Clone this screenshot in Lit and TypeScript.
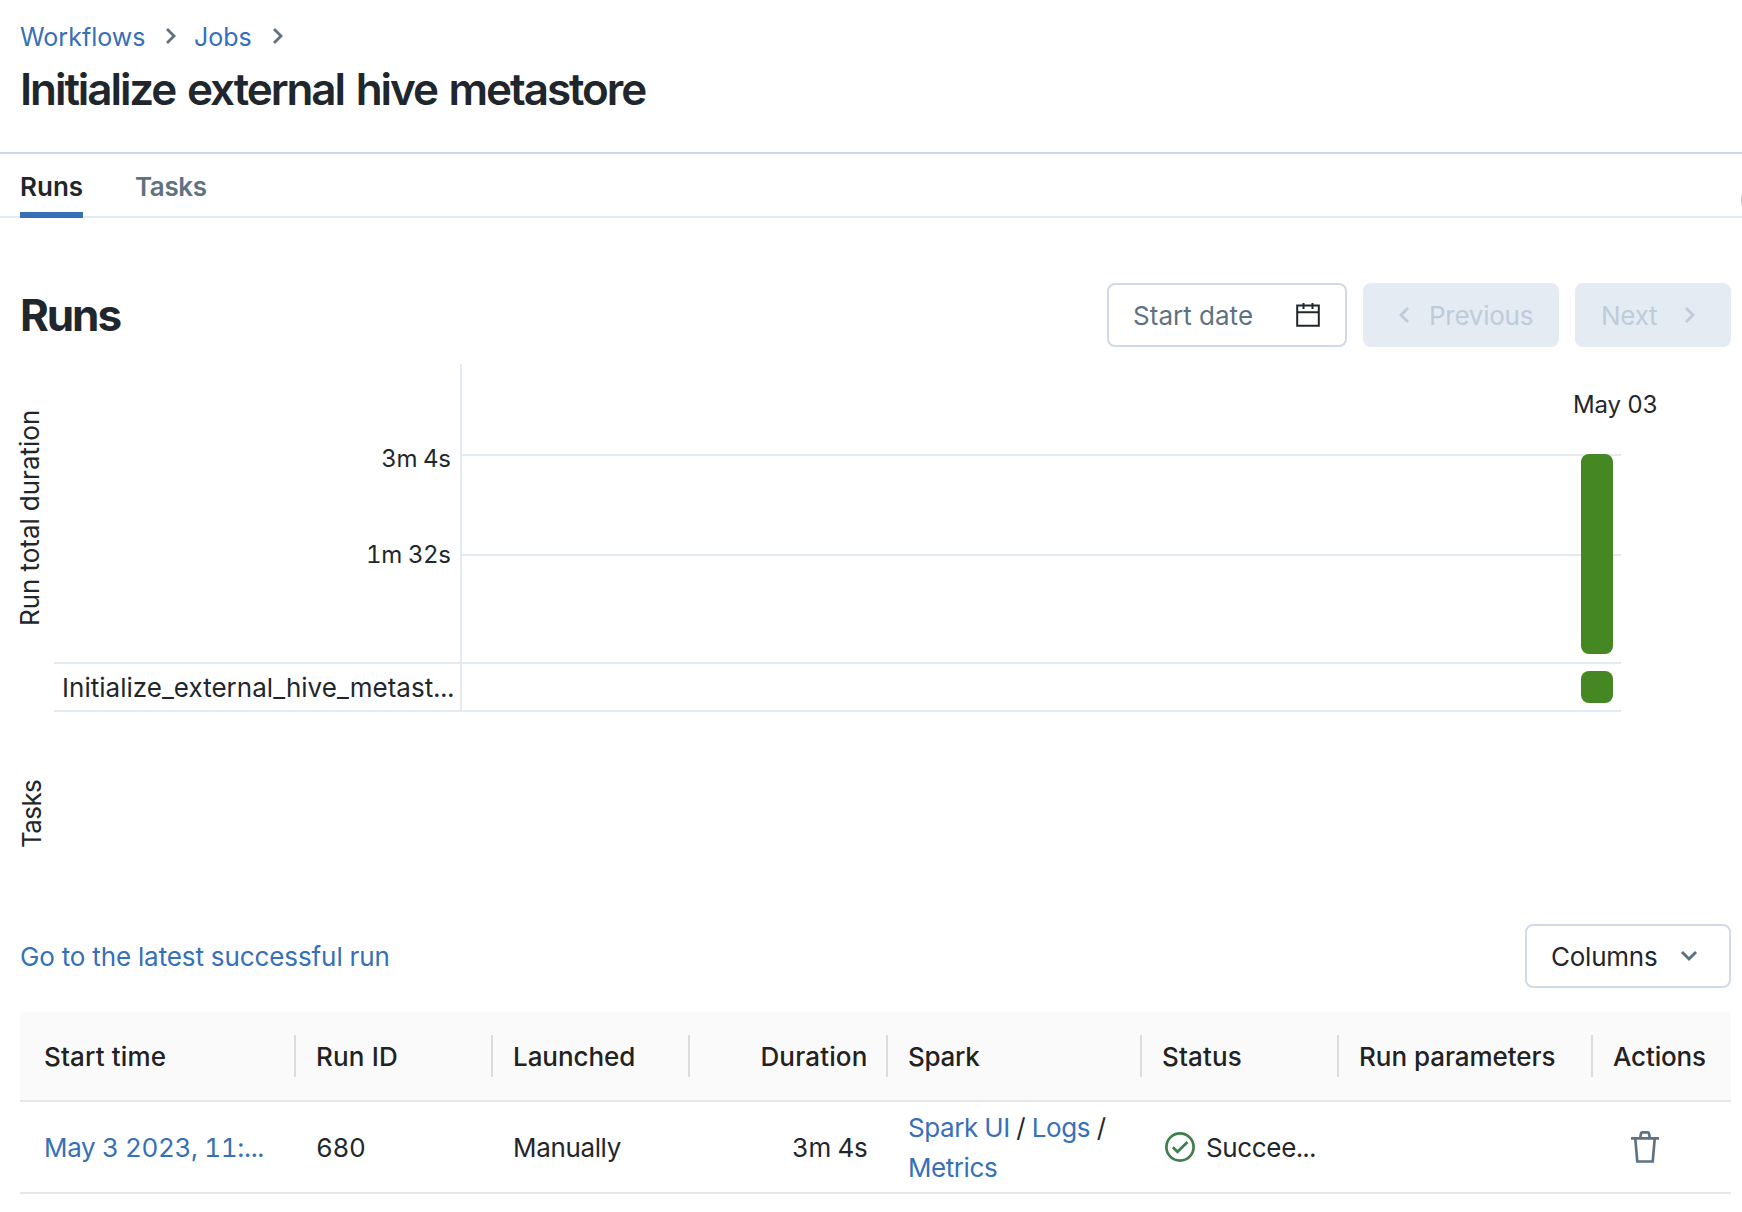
import { LitElement, html, css } from "lit";
import { customElement } from "lit/decorators.js";

const chevronRight = html`<svg class="chev" width="12" height="18" viewBox="0 0 12 18" aria-hidden="true"><path d="M2 2l7 7-7 7" fill="none" stroke="currentColor" stroke-width="2.8"/></svg>`;
const chevronLeft = html`<svg class="chev" width="12" height="18" viewBox="0 0 12 18" aria-hidden="true"><path d="M10 2L3 9l7 7" fill="none" stroke="currentColor" stroke-width="2.8"/></svg>`;
const chevronDown = html`<svg width="18" height="12" viewBox="0 0 18 12" aria-hidden="true"><path d="M2 2l7 7 7-7" fill="none" stroke="currentColor" stroke-width="3"/></svg>`;
const calendar = html`<svg width="24" height="26" viewBox="0 0 24 26" aria-hidden="true"><path d="M1.2 3.4h21.6v20.4H1.2zM1.2 10.2h21.6M7.5 1v6M16.5 1v6" fill="none" stroke="#1f272d" stroke-width="2"/></svg>`;
const checkCircle = html`<svg width="30" height="30" viewBox="0 0 30 30" aria-hidden="true"><circle cx="15" cy="15" r="13.6" fill="none" stroke="#3f7f4c" stroke-width="2.7"/><path d="M7.8 15.2l4.7 4.6 10-9.8" fill="none" stroke="#3f7f4c" stroke-width="2.7"/></svg>`;
const trash = html`<svg width="28" height="32" viewBox="0 0 28 32" aria-hidden="true"><path d="M0 7.3h28M9.2 7l.8-4.6q.2-1 1.2-1h5.600q1 0 1.200 1L18.800 7M4.300 8l2 22.500h15.400l2-22.500" fill="none" stroke="#5f7281" stroke-width="2.700"/></svg>`;

@customElement("app-root")
export class AppRoot extends LitElement {
  static styles = css`
    :host {
      display: block;
      position: relative;
      width: 1742px;
      height: 1212px;
      overflow: hidden;
      background: #fff;
      color: #1f272d;
      font: 400 26px/40px Inter, "Liberation Sans", sans-serif;
      font-variant-numeric: tabular-nums;
      white-space: nowrap;
    }
    * { box-sizing: border-box; }
    svg { display: block; flex: none; }
    a { color: #3670b8; text-decoration: none; }
    .header { height: 154px; padding: 17px 20px 0; border-bottom: 2px solid #d1d9e0; }
    .crumbs { display: flex; align-items: center; height: 40px; font-size: 25px; color: #5f7281; }
    .crumbs .chev { margin: 0 16.5px 2px 20px; }
    h1, h2 { margin: 0; font-size: 44px; font-weight: 600; line-height: 56px; }
    h1 { margin: 4px 0 0; letter-spacing: -2.08px; word-spacing: 2px; }
    h2 { font-weight: 700; letter-spacing: -2.1px; }
    .tabs { display: flex; gap: 52px; height: 64px; padding: 0 20px; border-bottom: 2px solid #e4ebf0; font-weight: 600; color: #5f7281; }
    .tab { height: 64px; padding-top: 13px; letter-spacing: -0.4px; }
    .tab.on { width: 63px; color: #1f272d; border-bottom: 6px solid #3670b8; letter-spacing: 0; }
    .clipped { position: absolute; left: 1740.5px; top: 176px; width: 48px; height: 48px; border: 2px solid #c4c8cc; border-radius: 50%; }
    .bar { display: flex; align-items: center; height: 64px; margin: 65px 11px 0 20px; }
    .grow { flex: 1; }
    .btn { display: flex; align-items: center; height: 64px; border-radius: 8px; border: 2px solid #cfdbe6; }
    .btn span { padding-top: 2px; }
    .date { width: 240px; padding: 0 25px 0 24px; justify-content: space-between; color: #5f7281; margin-right: 16px; letter-spacing: 0.06px; }
    .off { background: #e4ebf2; border: 0; color: #becbdb; letter-spacing: -0.25px; }
    .prev { width: 196px; padding-left: 35px; gap: 19px; margin-right: 16px; }
    .next { width: 156px; padding-left: 26px; gap: 27px; }
    .chart { display: flex; height: 560px; margin: 17px 0 0 20px; }
    .axes { width: 34px; }
    .axis { writing-mode: vertical-rl; transform: rotate(180deg); width: 20px; line-height: 20px; text-align: center; }
    .axis.total { height: 307px; }
    .axis.tasks { height: 285px; letter-spacing: -0.6px; margin-left: 2px; }
    .labels { width: 408px; height: 348px; border-right: 2px solid #e4ebf0; font-size: 24px; text-align: right; }
    .ticks { height: 298px; padding: 75px 9.5px 0 0; letter-spacing: -0.4px; }
    .tick { height: 96px; }
    .task { height: 50px; border: solid #e4ebf0; border-width: 2px 0; padding-left: 8px; font-size: 26px; line-height: 47px; text-align: left; letter-spacing: 0.02px; }
    .plot { position: relative; width: 1159px; height: 348px; display: grid; grid-template-columns: 1159px; grid-template-rows: 90px 100px 108px 50px; }
    .line { border-top: 2px solid #e4ebf0; }
    .line.last { border-bottom: 2px solid #e4ebf0; }
    .day { padding: 21px 0 0 1111px; font-size: 24px; letter-spacing: -0.15px; }
    .mark { position: absolute; left: 1119px; width: 32px; border-radius: 8px; background: #458722; }
    .mark.run { top: 90px; height: 200px; }
    .mark.step { top: 307px; height: 32px; }
    .tools { display: flex; align-items: center; height: 64px; margin: 0 11px 0 20px; letter-spacing: -0.09px; }
    .tools > a { padding-top: 2px; }
    .cols { width: 206px; padding-left: 24px; gap: 23px; color: #1f272d; letter-spacing: -0.25px; }
    .cols svg { color: #5f7281; }
    .table { margin: 24px 11px 0 20px; }
    .row { display: grid; grid-template-columns: 276px 197px 197px 198px 254px 197px 254px 138px; align-items: center; height: 92px; border-bottom: 2px solid #e6e7e8; }
    .row.head { height: 90px; background: #fafafa; color: #222; font-weight: 500; }
    .cell { padding-left: 20px; height: 42px; line-height: 44px; border-right: 2px solid transparent; letter-spacing: -0.35px; }
    .cell:first-child { padding-left: 24px; }
    .head .cell { border-color: #dcdcdc; letter-spacing: 0.15px; }
    .head .cell:last-child { border-color: transparent; letter-spacing: -0.15px; }
    .cell.num { text-align: right; padding-right: 18.5px; }
    .head .even { letter-spacing: -0.05px; }
    .head .tight { letter-spacing: -0.3px; }
    .cell.date-cell { letter-spacing: -0.35px; }
    .cell.spark { height: 80px; padding-top: 1px; line-height: 40px; white-space: normal; letter-spacing: -0.43px; }
    .cell.status { display: flex; align-items: center; gap: 11px; padding-left: 23px; }
    .cell.status span { padding-top: 1px; }
    .cell.act { display: flex; align-items: center; padding-left: 38px; }
  `;

  private columns = [
    { name: "Start time", cls: "" },
    { name: "Run ID", cls: "" },
    { name: "Launched", cls: "even" },
    { name: "Duration", cls: "num" },
    { name: "Spark", cls: "tight" },
    { name: "Status", cls: "" },
    { name: "Run parameters", cls: "even" },
    { name: "Actions", cls: "" },
  ];

  render() {
    return html`
      <header class="header">
        <nav class="crumbs"><a>Workflows</a>${chevronRight}<a>Jobs</a>${chevronRight}</nav>
        <h1>Initialize external hive metastore</h1>
      </header>
      <div class="tabs"><div class="tab on">Runs</div><div class="tab">Tasks</div></div>
      <div class="clipped"></div>

      <div class="bar">
        <h2>Runs</h2>
        <div class="grow"></div>
        <div class="btn date"><span>Start date</span>${calendar}</div>
        <div class="btn off prev">${chevronLeft}<span>Previous</span></div>
        <div class="btn off next"><span>Next</span>${chevronRight}</div>
      </div>

      <section class="chart">
        <div class="axes">
          <div class="axis total">Run total duration</div>
          <div class="axis tasks">Tasks</div>
        </div>
        <div class="labels">
          <div class="ticks"><div class="tick">3m 4s</div><div class="tick">1m 32s</div></div>
          <div class="task">Initialize_external_hive_metast...</div>
        </div>
        <div class="plot">
          <div class="day">May 03</div>
          <div class="line"></div>
          <div class="line"></div>
          <div class="line last"></div>
          <div class="mark run"></div>
          <div class="mark step"></div>
        </div>
      </section>

      <div class="tools">
        <a>Go to the latest successful run</a>
        <div class="grow"></div>
        <div class="btn cols"><span>Columns</span>${chevronDown}</div>
      </div>

      <section class="table">
        <div class="row head">${this.columns.map((c) => html`<div class="cell ${c.cls}">${c.name}</div>`)}</div>
        <div class="row">
          <div class="cell date-cell"><a>May 3 2023, 11:...</a></div>
          <div class="cell">680</div>
          <div class="cell">Manually</div>
          <div class="cell num">3m 4s</div>
          <div class="cell spark"><a>Spark UI</a> / <a>Logs</a> / <a>Metrics</a></div>
          <div class="cell status">${checkCircle}<span>Succee...</span></div>
          <div class="cell"></div>
          <div class="cell act">${trash}</div>
        </div>
      </section>
    `;
  }
}
